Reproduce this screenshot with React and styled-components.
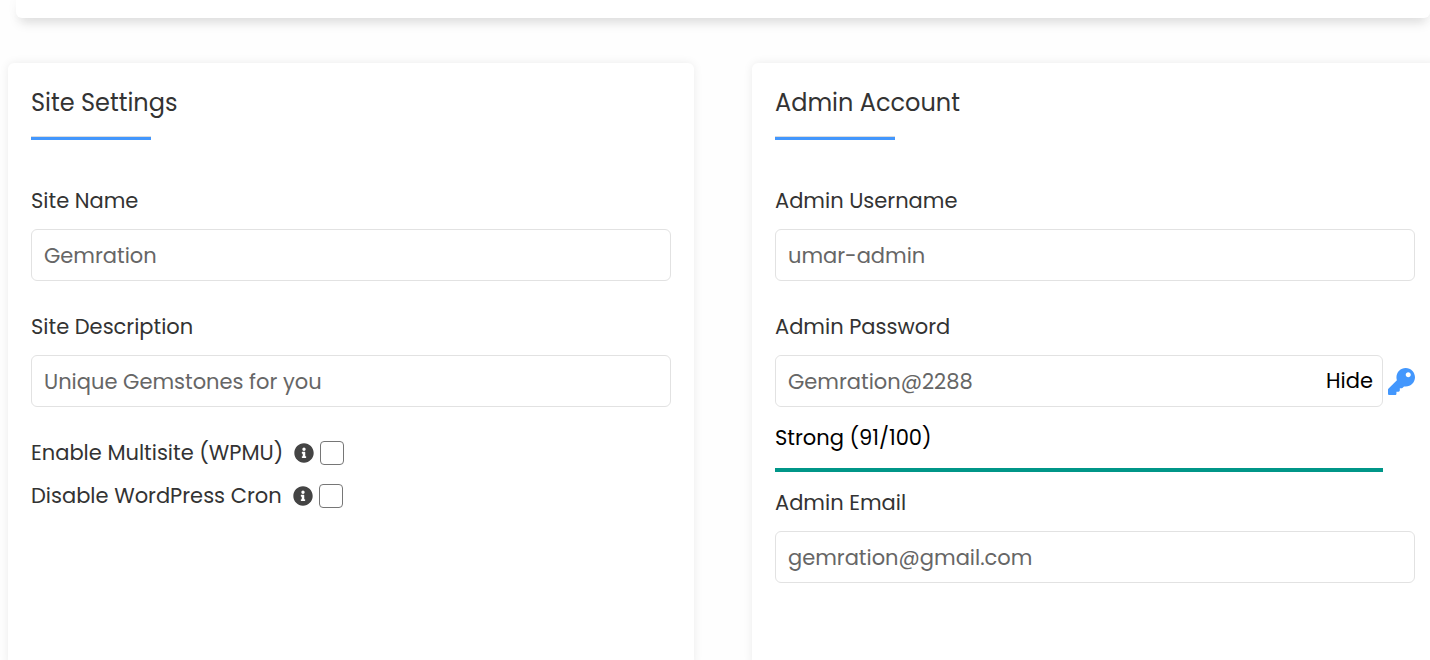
import React, { useState } from "react";
import styled, { createGlobalStyle } from "styled-components";
import { FaInfoCircle, FaKey } from "react-icons/fa";

const GlobalStyle = createGlobalStyle`
  *, *::before, *::after { box-sizing: border-box; }
  body {
    margin: 0;
    background: #fefefe;
    color: #333;
    font-family: Poppins, Inter, "Open Sans", sans-serif;
    font-size: 21px;
    font-weight: 400;
    line-height: 32px;
  }
`;

const Page = styled.main`
  min-height: 100vh;
  overflow: hidden;
  display: flex;
  flex-direction: column;
  gap: 45px;
`;

const TopPanel = styled.section`
  height: 18px;
  margin-left: 16px;
  background: #fff;
  border-radius: 0 0 6px 6px;
  box-shadow: 0 8px 12px -4px rgba(0, 0, 0, 0.15), 0 0 12px rgba(0, 0, 0, 0.04);
`;

const Columns = styled.form`
  flex: 1;
  display: grid;
  grid-template-columns: 1fr 1fr;
  gap: 58px;
  margin: 0 -8px -8px 8px;
`;

const Card = styled.section`
  min-width: 0;
  padding: 22px 23px;
  background: #fff;
  border-radius: 6px;
  box-shadow: 0 0 10px rgba(0, 0, 0, 0.08);
`;

const Title = styled.h2`
  margin: 0 0 45px;
  font-size: 24px;
  font-weight: 400;
  line-height: 36px;

  &::after {
    content: "";
    display: block;
    width: 120px;
    margin-top: 15px;
    border-top: 1px solid #dcdcdc;
    border-bottom: 3px solid #4397fd;
  }
`;

const Fields = styled.div`
  display: flex;
  flex-direction: column;
  gap: 30px;
`;

const FieldBox = styled.div`
  display: flex;
  flex-direction: column;
  gap: 12px;
`;

const Label = styled.label`
  align-self: flex-start;
`;

const TextInput = styled.input`
  width: 100%;
  min-width: 0;
  height: 52px;
  padding: 0 12px;
  border: 1px solid #e2e2e2;
  border-radius: 6px;
  background: #fff;
  color: #666;
  font: inherit;
`;

const PasswordRow = styled.div`
  display: flex;
  align-items: center;
  gap: 5px;
`;

const InputGroup = styled.div`
  flex: 1;
  display: flex;
  align-items: center;
  height: 52px;
  border: 1px solid #e2e2e2;
  border-radius: 6px;
  background: #fff;

  ${TextInput} {
    flex: 1;
    height: 100%;
    border: 0;
  }
`;

const PlainButton = styled.button`
  display: flex;
  padding: ${(p) => (p.$inset ? "0 9px" : "0")};
  border: 0;
  background: none;
  color: ${(p) => (p.$accent ? "#4397fd" : "#000")};
  font: inherit;
  cursor: pointer;
`;

const Strength = styled.div`
  margin: -15px 32px -15px 0;
  color: #000;
`;

const StrengthTrack = styled.div`
  height: 4px;
  margin-top: 14px;
  background: #009688;
`;

const Options = styled.div`
  display: flex;
  flex-direction: column;
  gap: 11px;
`;

const OptionRow = styled.div`
  display: flex;
  align-items: center;
  height: 32px;
`;

const InfoIcon = styled(FaInfoCircle)`
  margin: 0 6px 0 11px;
  color: #444;
`;

const Checkbox = styled.input`
  appearance: none;
  width: 24px;
  height: 24px;
  margin: 0;
  border: 1px solid #767676;
  border-radius: 4px;
  background: #fff;

  &:checked {
    background: #4397fd;
  }
`;

function Field({ id, label, value, type = "text" }) {
  return (
    <FieldBox>
      <Label htmlFor={id}>{label}</Label>
      <TextInput id={id} type={type} defaultValue={value} />
    </FieldBox>
  );
}

function Option({ id, label }) {
  return (
    <OptionRow>
      <label htmlFor={id}>{label}</label>
      <InfoIcon size={20} aria-hidden="true" />
      <Checkbox id={id} type="checkbox" />
    </OptionRow>
  );
}

export default function App() {
  const [visible, setVisible] = useState(true);

  return (
    <Page>
      <GlobalStyle />
      <TopPanel />
      <Columns onSubmit={(e) => e.preventDefault()}>
        <Card>
          <Title>Site Settings</Title>
          <Fields>
            <Field id="site-name" label="Site Name" value="Gemration" />
            <Field id="site-description" label="Site Description" value="Unique Gemstones for you" />
            <Options>
              <Option id="multisite" label="Enable Multisite (WPMU)" />
              <Option id="cron" label="Disable WordPress Cron" />
            </Options>
          </Fields>
        </Card>
        <Card>
          <Title>Admin Account</Title>
          <Fields>
            <Field id="admin-username" label="Admin Username" value="umar-admin" />
            <FieldBox>
              <Label htmlFor="admin-password">Admin Password</Label>
              <PasswordRow>
                <InputGroup>
                  <TextInput
                    id="admin-password"
                    type={visible ? "text" : "password"}
                    defaultValue="Gemration@2288"
                  />
                  <PlainButton type="button" $inset onClick={() => setVisible(!visible)}>
                    {visible ? "Hide" : "Show"}
                  </PlainButton>
                </InputGroup>
                <PlainButton type="button" $accent aria-label="Generate password">
                  <FaKey size={27} />
                </PlainButton>
              </PasswordRow>
            </FieldBox>
            <Strength>
              Strong (91/100)
              <StrengthTrack />
            </Strength>
            <Field id="admin-email" label="Admin Email" value="gemration@gmail.com" />
          </Fields>
        </Card>
      </Columns>
    </Page>
  );
}
